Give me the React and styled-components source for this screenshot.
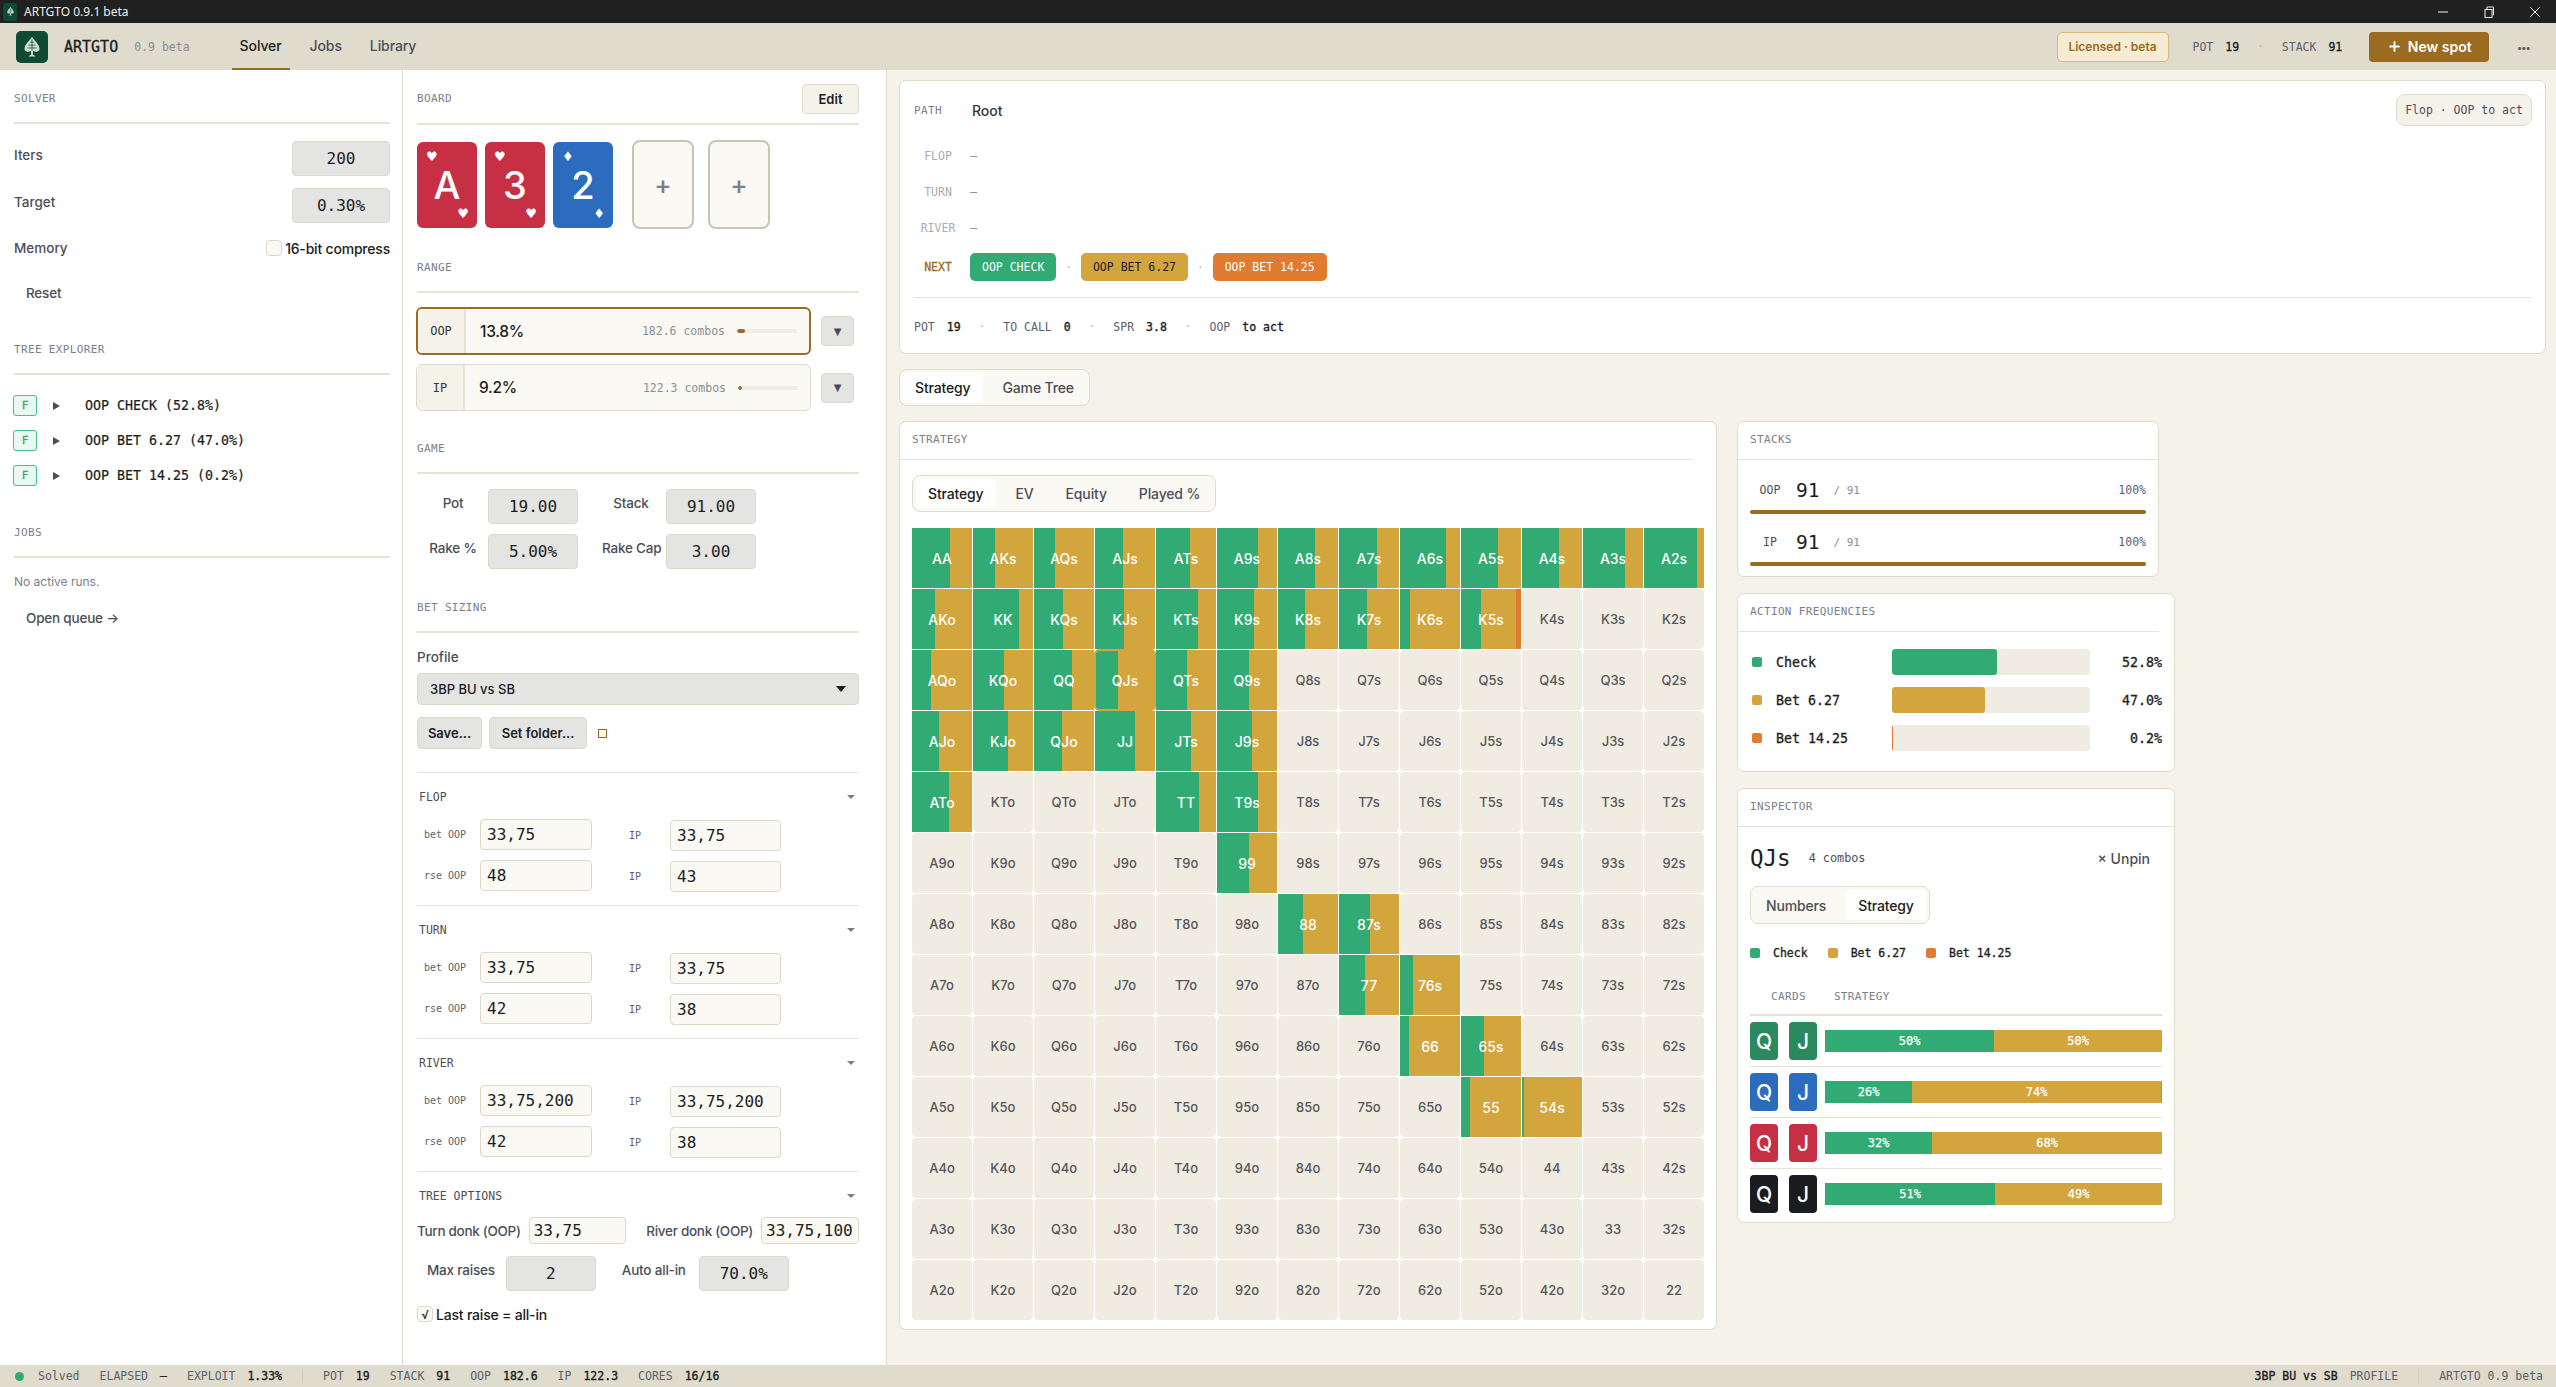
import React from "react";
import styled, { createGlobalStyle } from "styled-components";
import { Plus } from "lucide-react";

const SANS = `Inter, "Liberation Sans", sans-serif`;
const MONO = `"DejaVu Sans Mono", "Liberation Mono", monospace`;
const GREEN = "#31AB73";
const GOLD = "#D2A53D";
const ORANGE = "#E07B30";
const BROWN = "#9A6B20";
const LINE = "#DFDBCB";
const INK = "#1C1D21";

const GlobalStyle = createGlobalStyle`
  html, body { margin: 0; padding: 0; background: #F5F2EA; }
  body { font-family: ${SANS}; color: ${INK}; overflow: hidden; }
  * { box-sizing: border-box; }
`;

const Page = styled.div`
  width: 2556px;
  height: 1387px;
  display: flex;
  flex-direction: column;
`;

/* window chrome */
const TitleBar = styled.div`
  height: 23px;
  background: #202020;
  color: #eeeeee;
  display: flex;
  align-items: center;
  padding-left: 3px;
  font-family: "Noto Sans", sans-serif;
  font-size: 12px;
  flex: none;
`;
const TitleIcon = styled.span`
  width: 14px;
  height: 18px;
  border-radius: 3px;
  background: #0F4A36;
  display: flex;
  align-items: center;
  justify-content: center;
`;
const TitleText = styled.span`
  margin-left: 7px;
`;
const WinControls = styled.div`
  margin-left: auto;
  display: flex;
  align-items: center;
  gap: 34px;
  padding-right: 15px;
`;

/* top nav */
const Nav = styled.header`
  height: 47px;
  flex: none;
  background: #DFDBCD;
  display: flex;
  align-items: stretch;
  padding: 0 26px 0 16px;
`;
const Logo = styled.div`
  width: 32px;
  height: 32px;
  margin-top: 8px;
  border-radius: 5px;
  background: #0F4A36;
  display: flex;
  align-items: center;
  justify-content: center;
`;
const Brand = styled.span`
  margin-left: 16px;
  align-self: center;
  font-family: ${MONO};
  font-size: 15px;
  -webkit-text-stroke: 0.3px ${INK};
`;
const Version = styled.span`
  margin-left: 16px;
  align-self: center;
  font-family: ${MONO};
  font-size: 11.5px;
  color: #8a8d94;
`;
const NavTabs = styled.nav`
  margin-left: 25px;
  padding-left: 17px;
  display: flex;
  gap: 12px;
`;
const NavTab = styled.a`
  padding: 0 8px;
  display: flex;
  align-items: center;
  font-size: 14px;
  font-weight: 500;
  letter-spacing: -0.1px;
  color: ${(p) => (p.$active ? INK : "#4b4e57")};
  border-bottom: 2px solid ${(p) => (p.$active ? BROWN : "transparent")};
`;
const NavRight = styled.div`
  margin-left: auto;
  display: flex;
  align-items: center;
`;
const License = styled.span`
  height: 30px;
  width: 112px;
  display: flex;
  align-items: center;
  justify-content: center;
  border: 1px solid #D9B878;
  border-radius: 5px;
  background: #F6ECD2;
  color: ${BROWN};
  font-size: 12px;
  font-weight: 600;
`;
const MiniLabel = styled.span`
  font-family: ${MONO};
  font-size: 11.5px;
  color: #5B5F6B;
`;
const MiniValue = styled.span`
  font-family: ${MONO};
  font-size: 11.5px;
  color: ${INK};
  -webkit-text-stroke: 0.35px ${INK};
`;
const NavStat = styled.span`
  display: flex;
  gap: 12px;
  align-items: baseline;
  margin-left: ${(p) => p.$ml || 0}px;
`;
const Dot = styled.span`
  color: #b5b2a6;
  font-family: ${MONO};
  font-size: 11px;
  margin: 0 ${(p) => p.$m || 18}px;
`;
const NewSpot = styled.button`
  width: 120px;
  height: 30px;
  margin-left: 27px;
  border: 0;
  border-radius: 4px;
  background: ${BROWN};
  color: #fff;
  font-family: ${SANS};
  font-size: 14px;
  font-weight: 600;
  display: flex;
  align-items: center;
  justify-content: center;
  gap: 6px;
`;
const More = styled.span`
  margin-left: 28px;
  color: #5B5F6B;
  font-size: 10px;
  font-weight: 700;
  letter-spacing: -0.5px;
`;

/* main area */
const Main = styled.main`
  flex: 1;
  display: flex;
  min-height: 0;
`;
const Side = styled.section`
  width: ${(p) => p.$w}px;
  flex: none;
  background: #fff;
  border-right: 1px solid ${LINE};
  padding: 14px ${(p) => p.$pr}px 0 14px;
`;
const Head = styled.div`
  height: ${(p) => (p.$tall ? 41 : 40)}px;
  padding-bottom: ${(p) => (p.$tall ? 10 : 9)}px;
  margin-top: ${(p) => p.$mt || 0}px;
  border-bottom: 2px solid #E6E2D4;
  display: flex;
  align-items: center;
  justify-content: space-between;
`;
const Label = styled.span`
  font-family: ${MONO};
  font-size: 11px;
  letter-spacing: 0.35px;
  color: #7A7E89;
`;
const InputRow = styled.div`
  height: 35px;
  margin-top: ${(p) => p.$mt}px;
  display: flex;
  align-items: flex-start;
  justify-content: space-between;
`;
const RowLabel = styled.span`
  font-size: 13.5px;
  font-weight: 500;
  color: #4b4e57;
  line-height: 28px;
`;
const GrayInput = styled.input`
  width: ${(p) => p.$w || 90}px;
  height: 35px;
  border: 1px solid #DDD9C9;
  border-radius: 4px;
  background: #E4E4E3;
  color: ${INK};
  text-align: center;
  font-family: ${MONO};
  font-size: 16px;
  padding: 0;
  outline: none;
`;
const CheckRow = styled.div`
  height: 24px;
  margin-top: ${(p) => p.$mt || 0}px;
  display: flex;
  align-items: center;
  justify-content: ${(p) => (p.$between ? "space-between" : "flex-start")};
`;
const CheckWrap = styled.span`
  display: flex;
  align-items: center;
  gap: 3px;
  font-size: 14px;
  font-weight: 500;
  letter-spacing: -0.2px;
`;
const Box = styled.span`
  width: 16px;
  height: 16px;
  border: 1px solid #DDD9C9;
  border-radius: 4px;
  background: #FBF9F3;
  display: flex;
  align-items: center;
  justify-content: center;
  font-size: 12px;
  color: #33353c;
`;
const LinkButton = styled.a`
  display: block;
  height: 20px;
  line-height: 20px;
  margin: ${(p) => p.$mt}px 0 0 12px;
  font-size: 13.5px;
  font-weight: 500;
  color: #4b4e57;
  letter-spacing: -0.2px;
`;
const TreeList = styled.div`
  margin-top: 13px;
`;
const TreeRow = styled.div`
  height: 35px;
  display: flex;
  align-items: center;
  font-family: ${MONO};
  font-size: 13.3px;
  -webkit-text-stroke: 0.2px ${INK};
`;
const Flag = styled.span`
  width: 24px;
  height: 21px;
  margin-left: -1px;
  border: 1px solid #45C08A;
  border-radius: 3px;
  background: #E9F8F0;
  color: ${GREEN};
  font-size: 11px;
  -webkit-text-stroke: 0.3px ${GREEN};
  display: flex;
  align-items: center;
  justify-content: center;
`;
const Caret = styled.span`
  width: 0;
  height: 0;
  margin: 0 25px 0 16px;
  border-left: 7px solid #4b4e57;
  border-top: 4px solid transparent;
  border-bottom: 4px solid transparent;
`;
const Hint = styled.div`
  margin-top: 16px;
  height: 16px;
  line-height: 16px;
  font-size: 12px;
  color: #7A7E89;
`;

/* board */
const EditButton = styled.button`
  width: 57px;
  height: 30px;
  border: 1px solid ${LINE};
  border-radius: 4px;
  background: #F5F2EA;
  color: ${INK};
  font-family: ${SANS};
  font-size: 13px;
  font-weight: 600;
  padding: 0;
`;
const BoardRow = styled.div`
  margin-top: 15px;
  height: 89px;
  display: flex;
  align-items: center;
  gap: 8px;
`;
const BoardCard = styled.div`
  width: 60px;
  height: 86px;
  border-radius: 6px;
  background: ${(p) => p.$bg};
  color: #fff;
  position: relative;
  display: flex;
  align-items: center;
  justify-content: center;
  font-size: 38px;
  font-weight: 500;
`;
const Pip = styled.span`
  position: absolute;
  font-size: 13px;
  line-height: 1;
  font-family: "DejaVu Sans", sans-serif;
  ${(p) => (p.$end ? "right: 8px; bottom: 8px;" : "left: 9px; top: 8px;")}
`;
const AddCard = styled.div`
  width: 62px;
  height: 89px;
  margin-left: ${(p) => p.$ml || 6}px;
  border: 2px solid #C9C4B3;
  border-radius: 8px;
  background: #FBF9F3;
  color: #7A7E89;
  display: flex;
  align-items: center;
  justify-content: center;
  font-size: 26px;
  font-weight: 500;
`;

/* range */
const RangeRow = styled.div`
  margin-top: ${(p) => p.$mt}px;
  display: flex;
  align-items: center;
  gap: 10px;
  margin-left: -1px;
`;
const RangeBox = styled.div`
  width: 395px;
  height: ${(p) => (p.$active ? 48 : 47)}px;
  border: ${(p) => (p.$active ? `2px solid ${BROWN}` : `1px solid ${LINE}`)};
  border-radius: 6px;
  background: #FBF9F3;
  display: flex;
  align-items: stretch;
  overflow: hidden;
`;
const RangeSeat = styled.span`
  width: 48px;
  flex: none;
  background: #F5F2EA;
  border-right: 2px solid #E6E2D4;
  display: flex;
  align-items: center;
  justify-content: center;
  font-family: ${MONO};
  font-size: 12px;
  color: #33353c;
`;
const RangePct = styled.span`
  margin-left: 14px;
  align-self: center;
  font-size: 15.5px;
  font-weight: 500;
  letter-spacing: -0.3px;
`;
const Combos = styled.span`
  margin-left: auto;
  align-self: center;
  font-family: ${MONO};
  font-size: 11.5px;
  color: #8a8d94;
`;
const RangeTrack = styled.span`
  width: 60px;
  height: 4px;
  margin: 0 12px 0 12px;
  align-self: center;
  background: #F0ECE1;
  border-radius: 2px;
  overflow: hidden;
  display: flex;
`;
const RangeFill = styled.span`
  background: ${BROWN};
  border-radius: 2px;
`;
const DropButton = styled.button`
  width: 33px;
  height: 30px;
  border: 1px solid #DDD9C9;
  border-radius: 4px;
  background: #E4E4E3;
  color: #4b4e57;
  font-size: 10px;
  padding: 0;
  font-family: "DejaVu Sans", sans-serif;
`;

/* game */
const GameRow = styled.div`
  margin: ${(p) => p.$mt}px 0 0 ${(p) => p.$ml || 7}px;
  display: flex;
  gap: ${(p) => p.$gap || 24}px;
`;
const GameField = styled.div`
  display: flex;
  gap: ${(p) => p.$gap || 6}px;
`;
const FieldLabel = styled.span`
  width: ${(p) => (p.$w ? `${p.$w}px` : "auto")};
  text-align: center;
  white-space: nowrap;
  font-size: 13.5px;
  font-weight: 500;
  color: #4b4e57;
  line-height: 28px;
  letter-spacing: -0.2px;
`;

/* bet sizing */
const ProfileLabel = styled.div`
  margin-top: 16px;
  height: 16px;
  line-height: 16px;
  font-size: 13.5px;
  font-weight: 500;
  color: #4b4e57;
`;
const Select = styled.div`
  margin-top: 8px;
  height: 32px;
  width: 442px;
  padding: 0 12px;
  border: 1px solid #DDD9C9;
  border-radius: 4px;
  background: #E4E4E3;
  display: flex;
  align-items: center;
  justify-content: space-between;
  font-size: 13px;
  font-weight: 500;
`;
const Triangle = styled.span`
  width: 0;
  height: 0;
  border-top: ${(p) => p.$s * 1.2}px solid ${(p) => p.$c};
  border-left: ${(p) => p.$s}px solid transparent;
  border-right: ${(p) => p.$s}px solid transparent;
`;
const ButtonRow = styled.div`
  margin-top: 12px;
  display: flex;
  align-items: center;
  gap: 7px;
`;
const GrayButton = styled.button`
  height: 32px;
  width: ${(p) => p.$w}px;
  padding: 0;
  border: 1px solid #DDD9C9;
  border-radius: 4px;
  background: #E4E4E3;
  color: ${INK};
  font-family: ${SANS};
  font-size: 13px;
  font-weight: 600;
`;
const HollowSquare = styled.span`
  width: 9px;
  height: 9px;
  margin-left: 4px;
  border: 1px solid ${BROWN};
`;
const Group = styled.div`
  margin-top: ${(p) => p.$mt || 0}px;
  padding: 14px 0 ${(p) => (p.$open ? 0 : 14)}px;
  border-top: 1px solid #E6E2D4;
`;
const GroupTitle = styled.div`
  height: 20px;
  padding: 0 4px 0 2px;
  display: flex;
  align-items: center;
  justify-content: space-between;
  font-family: ${MONO};
  font-size: 11.5px;
  color: #4b4e57;
`;
const SizeGrid = styled.div`
  height: 31px;
  margin-top: ${(p) => p.$mt || 12}px;
  display: flex;
  gap: 15px;
`;
const SizeField = styled.div`
  height: 31px;
  display: flex;
  gap: 7px;
  align-items: center;
  margin-top: ${(p) => (p.$low ? 1 : 0)}px;
`;
const SizeLabel = styled.span`
  width: 56px;
  text-align: center;
  font-family: ${MONO};
  font-size: 10px;
  color: #5B5F6B;
`;
const TextInput = styled.input`
  width: ${(p) => p.$w || 112}px;
  height: ${(p) => p.$h || 31}px;
  border: 1px solid #DDD9C9;
  border-radius: 4px;
  background: #FBF9F3;
  color: ${INK};
  font-family: ${MONO};
  font-size: 16px;
  padding: 0 ${(p) => p.$px || 6}px;
  outline: none;
`;
const DonkRow = styled.div`
  margin-top: 11px;
  display: flex;
  align-items: center;
  justify-content: space-between;
`;
const DonkField = styled.div`
  display: flex;
  align-items: center;
  gap: 8px;
  font-size: 13.5px;
  font-weight: 500;
  letter-spacing: -0.3px;
  color: #4b4e57;
`;

/* right content */
const Content = styled.div`
  flex: 1;
  min-width: 0;
  padding: 10px 10px 0 12px;
`;
const Panel = styled.div`
  background: #fff;
  border: 1px solid ${LINE};
  border-radius: 7px;
  width: ${(p) => (p.$w ? `${p.$w}px` : "auto")};
  margin-top: ${(p) => p.$mt || 0}px;
`;
const PathPanel = styled(Panel)`
  height: 274px;
  padding: 13px 13px 0 14px;
`;
const PathRow = styled.div`
  height: 32px;
  display: flex;
  align-items: center;
  gap: 30px;
`;
const RootText = styled.span`
  font-size: 14px;
  font-weight: 500;
  color: #33353c;
`;
const StageBadge = styled.span`
  margin-left: auto;
  width: 136px;
  height: 32px;
  border: 1px solid ${LINE};
  border-radius: 9px;
  background: #F5F2EA;
  display: flex;
  align-items: center;
  justify-content: center;
  font-family: ${MONO};
  font-size: 11.5px;
  color: #4b4e57;
  white-space: pre;
`;
const StageList = styled.div`
  margin-top: 12px;
`;
const StageRow = styled.div`
  height: ${(p) => p.$h || 36}px;
  margin-top: ${(p) => p.$mt || 0}px;
  display: flex;
  align-items: center;
`;
const StageName = styled.span`
  width: 48px;
  margin-right: 8px;
  text-align: center;
  font-family: ${MONO};
  font-size: 11.5px;
  color: ${(p) => (p.$next ? BROWN : "#A9ABB3")};
  -webkit-text-stroke: ${(p) => (p.$next ? `0.3px ${BROWN}` : "0")};
`;
const Dash = styled.span`
  font-family: ${MONO};
  font-size: 12px;
  color: #8a8d94;
`;
const Chip = styled.span`
  height: 28px;
  padding: 0 12px;
  border-radius: 5px;
  background: ${(p) => p.$bg};
  color: ${(p) => p.$fg};
  display: flex;
  align-items: center;
  font-family: ${MONO};
  font-size: 11.5px;
`;
const StatLine = styled.div`
  margin-top: 16px;
  padding-top: 18px;
  border-top: 1px solid #E6E2D4;
  height: 40px;
  display: flex;
  align-items: center;
`;
const ViewTabs = styled.div`
  display: inline-flex;
  height: ${(p) => p.$h || 37}px;
  margin-top: ${(p) => p.$mt || 0}px;
  padding: 3px;
  gap: 8px;
  border: 1px solid ${LINE};
  border-radius: 8px;
  background: #FBF9F3;
`;
const ViewTab = styled.span`
  padding: 0 12px;
  border-radius: 5px;
  display: flex;
  align-items: center;
  font-size: 14px;
  font-weight: 500;
  letter-spacing: -0.15px;
  background: ${(p) => (p.$active ? "#fff" : "transparent")};
  color: ${(p) => (p.$active ? INK : "#4b4e57")};
`;
const Lower = styled.div`
  margin-top: 15px;
  display: flex;
  align-items: flex-start;
  gap: 20px;
`;
const StrategyPanel = styled(Panel)`
  width: 818px;
  height: 909px;
`;
const PanelHead = styled.div`
  height: 38px;
  width: ${(p) => (p.$w ? `${p.$w}px` : "auto")};
  padding: 0 0 3px 12px;
  border-bottom: 1px solid #E6E2D4;
  display: flex;
  align-items: center;
`;
const PanelBody = styled.div`
  padding: ${(p) => p.$pad || "15px 12px 0"};
`;
const Matrix = styled.div`
  margin-top: 16px;
  display: grid;
  grid-template-columns: repeat(13, 60px);
  grid-auto-rows: 60px;
  gap: 1px;
`;
const Cell = styled.div`
  display: flex;
  align-items: center;
  justify-content: center;
  font-size: ${(p) => (p.$on ? 14 : 13)}px;
  font-weight: 500;
  color: ${(p) => (p.$on ? "#fff" : "#55565C")};
  background: #F0ECE1;
  border-radius: ${(p) => (p.$on ? 0 : 4)}px;
  ${(p) => p.$picked && `outline: 2px solid ${GOLD}; outline-offset: -1px; border-radius: 4px; position: relative; z-index: 1;`}
`;
const SideStack = styled.div`
  width: 438px;
  display: flex;
  flex-direction: column;
  gap: 16px;
`;
const StackRow = styled.div`
  height: 24px;
  margin-top: ${(p) => p.$mt}px;
  display: flex;
  align-items: center;
`;
const SeatName = styled.span`
  width: 40px;
  text-align: center;
  font-family: ${MONO};
  font-size: 11.5px;
  color: #4b4e57;
`;
const StackValue = styled.span`
  margin-left: 6px;
  font-family: ${MONO};
  font-size: 19.5px;
  color: ${INK};
`;
const StackOf = styled.span`
  margin-left: 14px;
  font-family: ${MONO};
  font-size: 11px;
  color: #8a8d94;
  white-space: pre;
`;
const StackPct = styled.span`
  margin-left: auto;
  font-family: ${MONO};
  font-size: 11.5px;
  color: #5B5F6B;
`;
const StackBar = styled.div`
  height: 4px;
  margin-top: 8px;
  border-radius: 2px;
  background: ${BROWN};
`;
const FreqList = styled.div`
  padding: 17px 12px 20px;
  display: flex;
  flex-direction: column;
  gap: 12px;
`;
const FreqRow = styled.div`
  height: 26px;
  display: flex;
  align-items: center;
  font-family: ${MONO};
  font-size: 13.3px;
  -webkit-text-stroke: 0.3px ${INK};
`;
const Swatch = styled.span`
  width: 10px;
  height: 10px;
  flex: none;
  border-radius: 2px;
  background: ${(p) => p.$c};
  margin-left: ${(p) => p.$ml || 0}px;
`;
const FreqName = styled.span`
  width: 116px;
  margin-left: 14px;
`;
const FreqTrack = styled.span`
  width: 198px;
  height: 26px;
  border-radius: 3px;
  background: #F0ECE1;
  overflow: hidden;
  display: flex;
`;
const FreqFill = styled.span`
  background: ${(p) => p.$c};
  border-radius: 3px;
`;
const FreqValue = styled.span`
  width: 72px;
  text-align: right;
`;
const InspectorTop = styled.div`
  height: 32px;
  margin-top: 15px;
  display: flex;
  align-items: center;
`;
const ComboName = styled.span`
  font-family: ${MONO};
  font-size: 22.5px;
`;
const ComboCount = styled.span`
  margin-left: 18px;
  font-family: ${MONO};
  font-size: 11.8px;
  color: #4b4e57;
  white-space: pre;
`;
const Unpin = styled.span`
  margin: 0 12px 0 auto;
  font-size: 14px;
  font-weight: 500;
  color: #4b4e57;
`;
const Legend = styled.div`
  height: 16px;
  margin-top: 21px;
  display: flex;
  align-items: center;
  font-family: ${MONO};
  font-size: 11.5px;
  -webkit-text-stroke: 0.3px ${INK};
`;
const LegendItem = styled.span`
  margin: 0 20px 0 13px;
`;
const TableHead = styled.div`
  height: 28px;
  margin-top: 27px;
  padding: 2px 0 0 21px;
  border-bottom: 2px solid #E6E2D4;
  display: flex;
  gap: 28px;
  align-items: flex-start;
`;
const ComboRow = styled.div`
  height: 51px;
  display: flex;
  align-items: center;
  border-bottom: ${(p) => (p.$last ? "0" : "1px solid #E6E2D4")};
  padding-bottom: ${(p) => (p.$last ? 1 : 0)}px;
`;
const HoleCard = styled.span`
  width: 28px;
  height: 38px;
  margin-right: ${(p) => p.$mr}px;
  border-radius: 4px;
  background: ${(p) => p.$bg};
  color: #fff;
  display: flex;
  align-items: center;
  justify-content: center;
  font-size: 21px;
  font-weight: 500;
`;
const ComboBar = styled.div`
  flex: 1;
  height: 22px;
  display: flex;
  overflow: hidden;
`;
const ComboSeg = styled.span`
  background: ${(p) => p.$c};
  color: #fff;
  display: flex;
  align-items: center;
  justify-content: center;
  font-family: ${MONO};
  font-size: 12px;
  -webkit-text-stroke: 0.25px #fff;
`;

/* status bar */
const Status = styled.footer`
  height: 22px;
  flex: none;
  background: #DFDBCD;
  display: flex;
  align-items: center;
  padding: 0 13px 0 15px;
  font-family: ${MONO};
  font-size: 11.5px;
`;
const StatusDot = styled.span`
  width: 9px;
  height: 9px;
  border-radius: 50%;
  background: ${GREEN};
  margin-right: 14px;
`;
const StatusGroup = styled.div`
  display: flex;
  align-items: center;
  gap: ${(p) => p.$gap || 20}px;
  margin-left: ${(p) => (p.$end ? "auto" : 0)};
`;
const StatusSep = styled.span`
  width: 1px;
  height: 14px;
  background: #D3CFBF;
  margin: 0 20px;
`;

const RANKS = ["A", "K", "Q", "J", "T", "9", "8", "7", "6", "5", "4", "3", "2"];
const MIX = {
  AA: 64, AKs: 36, AQs: 35, AJs: 46, ATs: 57, A9s: 69, A8s: 61, A7s: 64, A6s: 76, A5s: 61, A4s: 61, A3s: 70, A2s: 88,
  AKo: 38, KK: 76, KQs: 48, KJs: 49, KTs: 70, K9s: 61, K8s: 45, K7s: 46, K6s: 17, K5s: 33,
  AQo: 31, KQo: 51, QQ: 63, QJs: 39, QTs: 51, Q9s: 53,
  AJo: 45, KJo: 58, QJo: 47, JJ: 66, JTs: 59, J9s: 58,
  ATo: 62, TT: 71, T9s: 68,
  99: 53, 88: 42, "87s": 52, 77: 44, "76s": 22, 66: 15, "65s": 39, 55: 15, "54s": 3.5,
};

const handName = (r, c) => {
  if (r === c) return RANKS[r] + RANKS[c];
  return r < c ? `${RANKS[r]}${RANKS[c]}s` : `${RANKS[c]}${RANKS[r]}o`;
};

const mixBackground = (hand, green) => {
  if (hand === "K5s") {
    return `linear-gradient(90deg, ${GREEN} ${green}%, ${GOLD} ${green}% 92%, ${ORANGE} 92%, ${ORANGE} 100%)`;
  }
  return `linear-gradient(90deg, ${GREEN} ${green}%, ${GOLD} ${green}%)`;
};

const HANDS = RANKS.flatMap((_, r) => RANKS.map((__, c) => handName(r, c)));

const COMBOS = [
  { bg: "#2A8A5E", a: 50.2, b: 49.8, at: "50%", bt: "50%" },
  { bg: "#2C6CBF", a: 25.9, b: 73.8, c: 0.3, at: "26%", bt: "74%" },
  { bg: "#C73044", a: 31.8, b: 68.2, at: "32%", bt: "68%" },
  { bg: "#1B1C1F", a: 50.5, b: 49.5, at: "51%", bt: "49%" },
];

const SpadeLogo = ({ size }) => (
  <svg width={size} height={size} viewBox="0 0 32 32">
    <path d="M16 5 C18 9 24 13 24 18 C24 21 19 22 17 20 L17 24 L20 26 L12 26 L15 24 L15 20 C13 22 8 21 8 18 C8 13 14 9 16 5 Z" fill="#CFE0D0" />
    <path d="M16 8 V20 M12 14 H20 M11 17 H21 M14 11 H18" stroke="#0F4A36" strokeWidth="0.8" />
  </svg>
);

const SizeBlock = ({ title, bet, rseOop, rseIp, mt }) => (
  <Group $mt={mt}>
    <GroupTitle>
      {title}
      <Triangle $s={4} $c="#7A7E89" />
    </GroupTitle>
    <SizeGrid>
      <SizeField>
        <SizeLabel>bet OOP</SizeLabel>
        <TextInput readOnly value={bet} />
      </SizeField>
      <SizeField $low>
        <SizeLabel>IP</SizeLabel>
        <TextInput readOnly value={bet} $w={111} />
      </SizeField>
    </SizeGrid>
    <SizeGrid $mt={10}>
      <SizeField>
        <SizeLabel>rse OOP</SizeLabel>
        <TextInput readOnly value={rseOop} />
      </SizeField>
      <SizeField $low>
        <SizeLabel>IP</SizeLabel>
        <TextInput readOnly value={rseIp} $w={111} />
      </SizeField>
    </SizeGrid>
  </Group>
);

const Stat = ({ label, value, ml }) => (
  <NavStat $ml={ml}>
    <MiniLabel>{label}</MiniLabel>
    <MiniValue>{value}</MiniValue>
  </NavStat>
);

export default function App() {
  return (
    <Page>
      <GlobalStyle />
      <TitleBar>
        <TitleIcon>
          <SpadeLogo size={13} />
        </TitleIcon>
        <TitleText>ARTGTO 0.9.1 beta</TitleText>
        <WinControls>
          <svg width="12" height="12" viewBox="0 0 12 12">
            <path d="M1 6 H11" stroke="#eee" strokeWidth="1" />
          </svg>
          <svg width="12" height="12" viewBox="0 0 12 12" fill="none">
            <rect x="2" y="3.5" width="7" height="8" stroke="#eee" />
            <path d="M4 3 V1 H10.5 V9 H9.5" stroke="#eee" />
          </svg>
          <svg width="12" height="12" viewBox="0 0 12 12">
            <path d="M1 1 L11 11 M11 1 L1 11" stroke="#eee" strokeWidth="1" />
          </svg>
        </WinControls>
      </TitleBar>

      <Nav>
        <Logo>
          <SpadeLogo size={30} />
        </Logo>
        <Brand>ARTGTO</Brand>
        <Version>0.9 beta</Version>
        <NavTabs>
          <NavTab $active>Solver</NavTab>
          <NavTab>Jobs</NavTab>
          <NavTab>Library</NavTab>
        </NavTabs>
        <NavRight>
          <License>Licensed · beta</License>
          <Stat label="POT" value="19" ml={24} />
          <Dot>·</Dot>
          <Stat label="STACK" value="91" />
          <NewSpot>
            <Plus size={15} strokeWidth={3} />
            New spot
          </NewSpot>
          <More>•••</More>
        </NavRight>
      </Nav>

      <Main>
        <Side $w={403} $pr={12}>
          <Head>
            <Label>SOLVER</Label>
          </Head>
          <InputRow $mt={17}>
            <RowLabel>Iters</RowLabel>
            <GrayInput readOnly value="200" $w={98} />
          </InputRow>
          <InputRow $mt={12}>
            <RowLabel>Target</RowLabel>
            <GrayInput readOnly value="0.30%" $w={98} />
          </InputRow>
          <CheckRow $mt={13} $between>
            <RowLabel>Memory</RowLabel>
            <CheckWrap>
              <Box />
              16-bit compress
            </CheckWrap>
          </CheckRow>
          <LinkButton $mt={23}>Reset</LinkButton>
          <Head $mt={32}>
            <Label>TREE EXPLORER</Label>
          </Head>
          <TreeList>
            <TreeRow>
              <Flag>F</Flag>
              <Caret />
              OOP CHECK (52.8%)
            </TreeRow>
            <TreeRow>
              <Flag>F</Flag>
              <Caret />
              OOP BET 6.27 (47.0%)
            </TreeRow>
            <TreeRow>
              <Flag>F</Flag>
              <Caret />
              OOP BET 14.25 (0.2%)
            </TreeRow>
          </TreeList>
          <Head $mt={25}>
            <Label>JOBS</Label>
          </Head>
          <Hint>No active runs.</Hint>
          <LinkButton $mt={18}>Open queue →</LinkButton>
        </Side>

        <Side $w={484} $pr={27}>
          <Head $tall>
            <Label>BOARD</Label>
            <EditButton>Edit</EditButton>
          </Head>
          <BoardRow>
            <BoardCard $bg="#C73044">
              <Pip>♥</Pip>A<Pip $end>♥</Pip>
            </BoardCard>
            <BoardCard $bg="#C73044">
              <Pip>♥</Pip>3<Pip $end>♥</Pip>
            </BoardCard>
            <BoardCard $bg="#2C6CBF">
              <Pip>♦</Pip>2<Pip $end>♦</Pip>
            </BoardCard>
            <AddCard $ml={11}>+</AddCard>
            <AddCard>+</AddCard>
          </BoardRow>

          <Head $mt={24}>
            <Label>RANGE</Label>
          </Head>
          <RangeRow $mt={14}>
            <RangeBox $active>
              <RangeSeat>OOP</RangeSeat>
              <RangePct>13.8%</RangePct>
              <Combos>182.6 combos</Combos>
              <RangeTrack>
                <RangeFill style={{ width: "13.8%" }} />
              </RangeTrack>
            </RangeBox>
            <DropButton>▼</DropButton>
          </RangeRow>
          <RangeRow $mt={9}>
            <RangeBox>
              <RangeSeat>IP</RangeSeat>
              <RangePct>9.2%</RangePct>
              <Combos>122.3 combos</Combos>
              <RangeTrack>
                <RangeFill style={{ width: "7%" }} />
              </RangeTrack>
            </RangeBox>
            <DropButton>▼</DropButton>
          </RangeRow>

          <Head $mt={23}>
            <Label>GAME</Label>
          </Head>
          <GameRow $mt={15}>
            <GameField>
              <FieldLabel $w={58}>Pot</FieldLabel>
              <GrayInput readOnly value="19.00" />
            </GameField>
            <GameField>
              <FieldLabel $w={58}>Stack</FieldLabel>
              <GrayInput readOnly value="91.00" />
            </GameField>
          </GameRow>
          <GameRow $mt={10}>
            <GameField>
              <FieldLabel $w={58}>Rake %</FieldLabel>
              <GrayInput readOnly value="5.00%" />
            </GameField>
            <GameField>
              <FieldLabel $w={58}>Rake Cap</FieldLabel>
              <GrayInput readOnly value="3.00" />
            </GameField>
          </GameRow>

          <Head $mt={24}>
            <Label>BET SIZING</Label>
          </Head>
          <ProfileLabel>Profile</ProfileLabel>
          <Select>
            3BP BU vs SB
            <Triangle $s={5} $c={INK} />
          </Select>
          <ButtonRow>
            <GrayButton $w={65}>Save...</GrayButton>
            <GrayButton $w={98}>Set folder...</GrayButton>
            <HollowSquare />
          </ButtonRow>

          <SizeBlock mt={23} title="FLOP" bet="33,75" rseOop="48" rseIp="43" />
          <SizeBlock title="TURN" bet="33,75" rseOop="42" rseIp="38" />
          <SizeBlock title="RIVER" bet="33,75,200" rseOop="42" rseIp="38" />

          <Group $open>
            <GroupTitle>
              TREE OPTIONS
              <Triangle $s={4} $c="#7A7E89" />
            </GroupTitle>
            <DonkRow>
              <DonkField>
                Turn donk (OOP)
                <TextInput readOnly value="33,75" $w={97} $h={27} $px={4} />
              </DonkField>
              <DonkField>
                River donk (OOP)
                <TextInput readOnly value="33,75,100" $w={98} $h={27} $px={4} />
              </DonkField>
            </DonkRow>
            <GameRow $mt={12} $ml={10} $gap={26}>
              <GameField $gap={11}>
                <FieldLabel>Max raises</FieldLabel>
                <GrayInput readOnly value="2" />
              </GameField>
              <GameField $gap={13}>
                <FieldLabel>Auto all-in</FieldLabel>
                <GrayInput readOnly value="70.0%" />
              </GameField>
            </GameRow>
            <CheckRow $mt={11}>
              <CheckWrap>
                <Box>√</Box>
                Last raise = all-in
              </CheckWrap>
            </CheckRow>
          </Group>
        </Side>

        <Content>
          <PathPanel>
            <PathRow>
              <Label>PATH</Label>
              <RootText>Root</RootText>
              <StageBadge>Flop · OOP to act</StageBadge>
            </PathRow>
            <StageList>
              {["FLOP", "TURN", "RIVER"].map((stage) => (
                <StageRow key={stage}>
                  <StageName>{stage}</StageName>
                  <Dash>—</Dash>
                </StageRow>
              ))}
              <StageRow $h={28} $mt={7}>
                <StageName $next>NEXT</StageName>
                <Chip $bg={GREEN} $fg="#fff">OOP CHECK</Chip>
                <Dot $m={9}>·</Dot>
                <Chip $bg={GOLD} $fg={INK}>OOP BET 6.27</Chip>
                <Dot $m={9}>·</Dot>
                <Chip $bg={ORANGE} $fg="#fff">OOP BET 14.25</Chip>
              </StageRow>
            </StageList>
            <StatLine>
              <Stat label="POT" value="19" />
              <Dot>·</Dot>
              <Stat label="TO CALL" value="0" />
              <Dot>·</Dot>
              <Stat label="SPR" value="3.8" />
              <Dot>·</Dot>
              <Stat label="OOP" value="to act" />
            </StatLine>
          </PathPanel>

          <ViewTabs $mt={15}>
            <ViewTab $active>Strategy</ViewTab>
            <ViewTab>Game Tree</ViewTab>
          </ViewTabs>

          <Lower>
            <StrategyPanel>
              <PanelHead $w={793}>
                <Label>STRATEGY</Label>
              </PanelHead>
              <PanelBody>
                <ViewTabs>
                  <ViewTab $active>Strategy</ViewTab>
                  <ViewTab>EV</ViewTab>
                  <ViewTab>Equity</ViewTab>
                  <ViewTab>Played %</ViewTab>
                </ViewTabs>
                <Matrix>
                  {HANDS.map((hand) => {
                    const green = MIX[hand];
                    const on = green !== undefined;
                    return (
                      <Cell
                        key={hand}
                        $on={on}
                        $picked={hand === "QJs"}
                        style={on ? { background: mixBackground(hand, green) } : undefined}
                      >
                        {hand}
                      </Cell>
                    );
                  })}
                </Matrix>
              </PanelBody>
            </StrategyPanel>

            <SideStack>
              <Panel $w={422}>
                <PanelHead>
                  <Label>STACKS</Label>
                </PanelHead>
                <PanelBody $pad="18px 12px 10px">
                  <StackRow $mt={0}>
                    <SeatName>OOP</SeatName>
                    <StackValue>91</StackValue>
                    <StackOf>/ 91</StackOf>
                    <StackPct>100%</StackPct>
                  </StackRow>
                  <StackBar />
                  <StackRow $mt={16}>
                    <SeatName>IP</SeatName>
                    <StackValue>91</StackValue>
                    <StackOf>/ 91</StackOf>
                    <StackPct>100%</StackPct>
                  </StackRow>
                  <StackBar />
                </PanelBody>
              </Panel>

              <Panel>
                <PanelHead $w={421}>
                  <Label>ACTION FREQUENCIES</Label>
                </PanelHead>
                <FreqList>
                  {[
                    ["Check", GREEN, 52.8, "52.8%"],
                    ["Bet 6.27", GOLD, 47, "47.0%"],
                    ["Bet 14.25", ORANGE, 0.5, "0.2%"],
                  ].map(([name, color, pct, text]) => (
                    <FreqRow key={name}>
                      <Swatch $c={color} $ml={2} />
                      <FreqName>{name}</FreqName>
                      <FreqTrack>
                        <FreqFill $c={color} style={{ width: `${pct}%` }} />
                      </FreqTrack>
                      <FreqValue>{text}</FreqValue>
                    </FreqRow>
                  ))}
                </FreqList>
              </Panel>

              <Panel>
                <PanelHead>
                  <Label>INSPECTOR</Label>
                </PanelHead>
                <PanelBody $pad="0 12px 2px">
                  <InspectorTop>
                    <ComboName>QJs</ComboName>
                    <ComboCount>4 combos</ComboCount>
                    <Unpin>× Unpin</Unpin>
                  </InspectorTop>
                  <ViewTabs $mt={12} $h={38}>
                    <ViewTab>Numbers</ViewTab>
                    <ViewTab $active>Strategy</ViewTab>
                  </ViewTabs>
                  <Legend>
                    <Swatch $c={GREEN} />
                    <LegendItem>Check</LegendItem>
                    <Swatch $c={GOLD} />
                    <LegendItem>Bet 6.27</LegendItem>
                    <Swatch $c={ORANGE} />
                    <LegendItem>Bet 14.25</LegendItem>
                  </Legend>
                  <TableHead>
                    <Label>CARDS</Label>
                    <Label>STRATEGY</Label>
                  </TableHead>
                  {COMBOS.map((combo, i) => (
                    <ComboRow key={combo.bg} $last={i === COMBOS.length - 1}>
                      <HoleCard $bg={combo.bg} $mr={11}>Q</HoleCard>
                      <HoleCard $bg={combo.bg} $mr={8}>J</HoleCard>
                      <ComboBar>
                        <ComboSeg $c={GREEN} style={{ width: `${combo.a}%` }}>{combo.at}</ComboSeg>
                        <ComboSeg $c={GOLD} style={{ width: `${combo.b}%` }}>{combo.bt}</ComboSeg>
                        {combo.c && <ComboSeg $c={ORANGE} style={{ width: `${combo.c}%` }} />}
                      </ComboBar>
                    </ComboRow>
                  ))}
                </PanelBody>
              </Panel>
            </SideStack>
          </Lower>
        </Content>
      </Main>

      <Status>
        <StatusDot />
        <StatusGroup>
          <MiniLabel>Solved</MiniLabel>
          <Stat label="ELAPSED" value="—" />
          <Stat label="EXPLOIT" value="1.33%" />
        </StatusGroup>
        <StatusSep />
        <StatusGroup>
          <Stat label="POT" value="19" />
          <Stat label="STACK" value="91" />
          <Stat label="OOP" value="182.6" />
          <Stat label="IP" value="122.3" />
          <Stat label="CORES" value="16/16" />
        </StatusGroup>
        <StatusGroup $end $gap={12}>
          <MiniValue>3BP BU vs SB</MiniValue>
          <MiniLabel>PROFILE</MiniLabel>
        </StatusGroup>
        <StatusSep />
        <MiniLabel>ARTGTO 0.9 beta</MiniLabel>
      </Status>
    </Page>
  );
}
